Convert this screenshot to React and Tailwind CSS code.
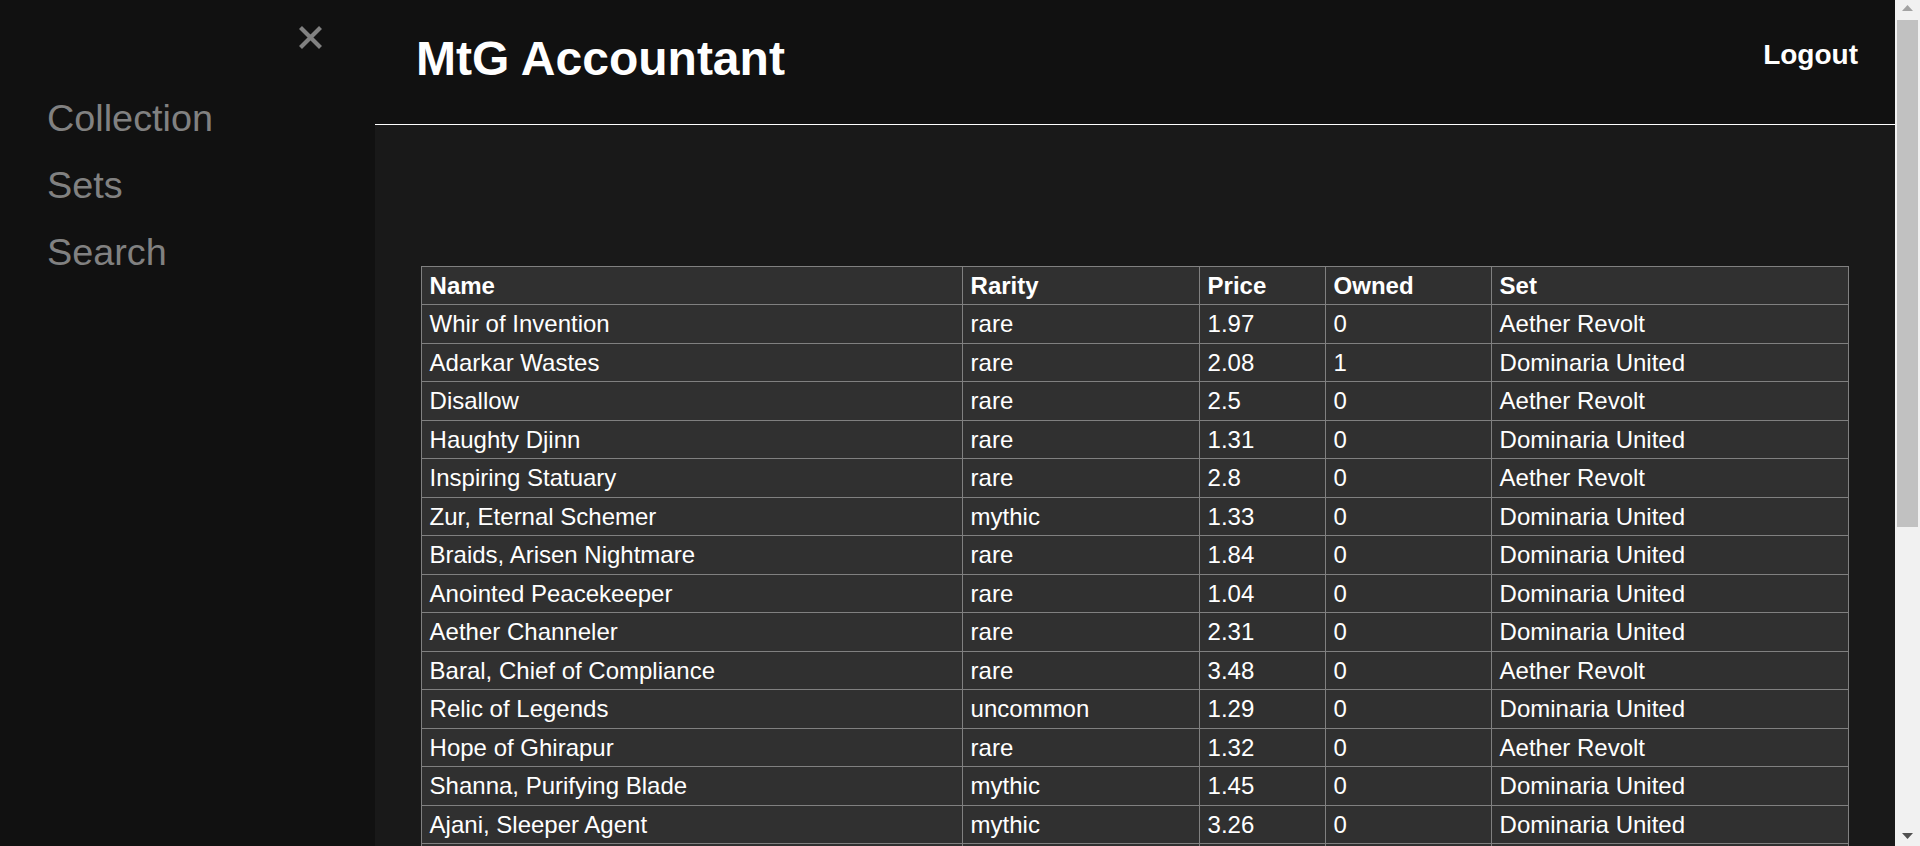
import React from "react";

const rows = [
  ["Whir of Invention", "rare", "1.97", "0", "Aether Revolt"],
  ["Adarkar Wastes", "rare", "2.08", "1", "Dominaria United"],
  ["Disallow", "rare", "2.5", "0", "Aether Revolt"],
  ["Haughty Djinn", "rare", "1.31", "0", "Dominaria United"],
  ["Inspiring Statuary", "rare", "2.8", "0", "Aether Revolt"],
  ["Zur, Eternal Schemer", "mythic", "1.33", "0", "Dominaria United"],
  ["Braids, Arisen Nightmare", "rare", "1.84", "0", "Dominaria United"],
  ["Anointed Peacekeeper", "rare", "1.04", "0", "Dominaria United"],
  ["Aether Channeler", "rare", "2.31", "0", "Dominaria United"],
  ["Baral, Chief of Compliance", "rare", "3.48", "0", "Aether Revolt"],
  ["Relic of Legends", "uncommon", "1.29", "0", "Dominaria United"],
  ["Hope of Ghirapur", "rare", "1.32", "0", "Aether Revolt"],
  ["Shanna, Purifying Blade", "mythic", "1.45", "0", "Dominaria United"],
  ["Ajani, Sleeper Agent", "mythic", "3.26", "0", "Dominaria United"],
];

const cell =
  "border border-[#808080] pl-[8px] pr-[8px] py-[5px] leading-[27.47px] text-left align-middle whitespace-nowrap overflow-hidden";

export default function App() {
  return (
    <div className="flex h-[846px] w-full overflow-hidden font-['Liberation_Sans',Arial,sans-serif] text-white">
      <aside className="w-[375px] shrink-0 bg-[#111111] flex flex-col">
        <div className="h-[85px] flex justify-end items-start pt-[26px] pr-[53px]">
          <svg width="23" height="23" viewBox="0 0 23 23">
            <path d="M1.5 1.5 L21.5 21.5 M21.5 1.5 L1.5 21.5" stroke="#818181" strokeWidth="4.2" />
          </svg>
        </div>
        <nav className="flex flex-col pl-[47px]">
          {["Collection", "Sets", "Search"].map((l) => (
            <a key={l} className="block text-[37.8px] leading-[67px] text-[#818181]">
              {l}
            </a>
          ))}
        </nav>
      </aside>

      <main className="flex-1 min-w-0 flex flex-col bg-[#191919]">
        <header className="h-[125px] shrink-0 bg-[#111111] border-b border-white flex justify-between items-start pl-[41px] pr-[37px]">
          <h1 className="mt-[32px] text-[48px] font-bold leading-[54.6px] text-white">MtG Accountant</h1>
          <button className="mt-[39px] text-[28px] font-bold leading-[32.2px] text-white">Logout</button>
        </header>
        <div className="pt-[141px]">
          <table className="w-[94%] mx-auto table-fixed border-collapse border border-[#808080] bg-[#303030] text-[24px]">
            <colgroup>
              <col className="w-[541px]" />
              <col className="w-[237px]" />
              <col className="w-[126px]" />
              <col className="w-[166px]" />
              <col />
            </colgroup>
            <thead>
              <tr>
                {["Name", "Rarity", "Price", "Owned", "Set"].map((h) => (
                  <th key={h} className={cell + " font-bold"}>
                    {h}
                  </th>
                ))}
              </tr>
            </thead>
            <tbody>
              {rows.map((r, i) => (
                <tr key={i}>
                  {r.map((c, j) => (
                    <td key={j} className={cell + " font-normal"}>
                      {c}
                    </td>
                  ))}
                </tr>
              ))}
              <tr>
                {[0, 1, 2, 3, 4].map((j) => (
                  <td key={j} className={cell + " h-[38px]"} />
                ))}
              </tr>
            </tbody>
          </table>
        </div>
      </main>

      <div className="w-[25px] shrink-0 bg-[#f1f1f1] flex flex-col">
        <div className="h-[20px] flex justify-center pt-[5px]">
          <svg width="11" height="6" viewBox="0 0 11 6">
            <path d="M5.5 0 L11 6 L0 6 Z" fill="#a3a3a3" />
          </svg>
        </div>
        <div className="mx-[2px] h-[507px] bg-[#c1c1c1]" />
        <div className="flex-1" />
        <div className="h-[20px] flex justify-center pt-[7px]">
          <svg width="11" height="6" viewBox="0 0 11 6">
            <path d="M0 0 L11 0 L5.5 6 Z" fill="#505050" />
          </svg>
        </div>
      </div>
    </div>
  );
}
